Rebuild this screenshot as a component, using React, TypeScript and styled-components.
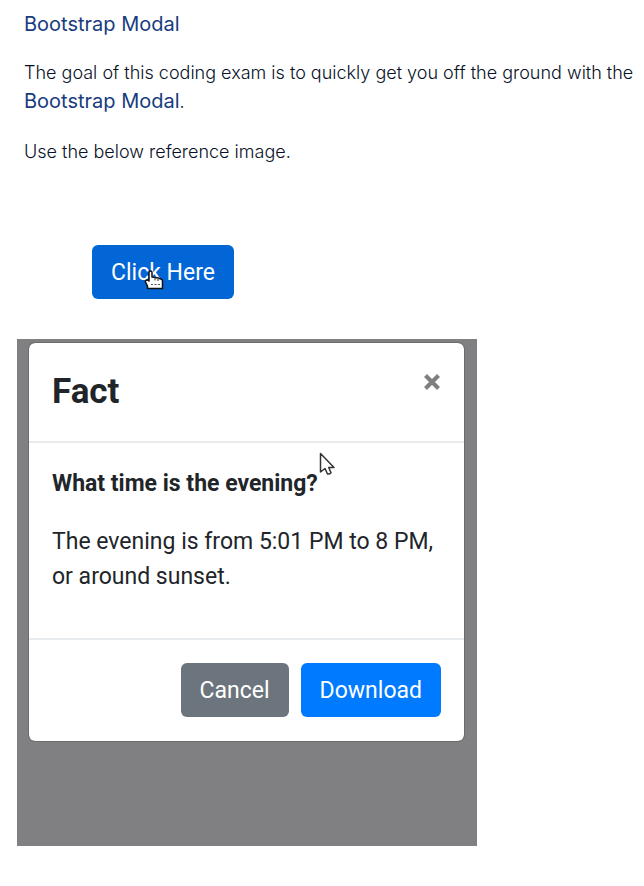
import React from 'react';
import styled, { createGlobalStyle } from 'styled-components';

const GlobalStyle = createGlobalStyle`
  *, *::before, *::after { box-sizing: border-box; }
  body {
    margin: 0;
    background: #fff;
    color: #212529;
    font-family: Roboto, "Liberation Sans", sans-serif;
  }
`;

const Page = styled.main`
  padding: 10px 0 40px;
`;

const Intro = styled.section`
  padding: 0 8px 0 24px;
  color: #071127;
  font-family: Inter, "Liberation Sans", sans-serif;
`;

const PageTitle = styled.h1`
  margin: 0 0 20px;
  color: #183b80;
  font-size: 20px;
  font-weight: 400;
  line-height: 28px;
`;

const IntroText = styled.p`
  margin: 0 0 21px;
  font-size: 18px;
  font-weight: 300;
  line-height: 29px;
`;

const Topic = styled.span`
  color: #183b80;
  font-size: 20px;
  font-weight: 400;
`;

const Button = styled.button<{ $color: string }>`
  border: 0;
  border-radius: 6px;
  padding: 11px 19px 9px;
  background: ${({ $color }) => $color};
  color: #fff;
  font-family: inherit;
  font-size: 23px;
  line-height: 34px;
  cursor: pointer;
`;

const LaunchArea = styled.div`
  display: flex;
  position: relative;
  width: fit-content;
  margin: 79px 0 40px 92px;
`;

const HandPointer = styled.svg`
  position: absolute;
  left: 52px;
  top: 25px;
  pointer-events: none;
`;

const Backdrop = styled.div`
  max-width: 460px;
  min-height: 507px;
  margin: 0 17px;
  padding: 3px 12px 104px 11px;
  background: #808082;
`;

const Dialog = styled.section`
  position: relative;
  border: 1px solid #6c6c6e;
  border-radius: 7px;
  background: #fff;
  background-clip: padding-box;
`;

const DialogHeader = styled.header`
  display: flex;
  justify-content: space-between;
  align-items: flex-start;
  padding: 23px;
  border-bottom: 2px solid #e9ecef;
`;

const DialogTitle = styled.h2`
  margin: 0;
  font-size: 35px;
  font-weight: 700;
  line-height: 52px;
`;

const CloseButton = styled.button`
  display: flex;
  border: 0;
  padding: 7px 0;
  background: transparent;
  color: #7f7f7f;
  cursor: pointer;
`;

const DialogBody = styled.div`
  padding: 23px 23px 44px;
  font-size: 23px;
  line-height: 35px;
`;

const Question = styled.h3`
  margin: 0 0 23px;
  font-size: 23px;
  font-weight: 700;
  line-height: 35px;
`;

const Answer = styled.p`
  margin: 0;
`;

const DialogFooter = styled.footer`
  display: flex;
  justify-content: flex-end;
  gap: 12px;
  padding: 23px 23px 24px;
  border-top: 2px solid #e9ecef;
`;

const ArrowPointer = styled.svg`
  position: absolute;
  left: 290px;
  top: 109px;
  pointer-events: none;
`;

export default function App() {
  return (
    <Page>
      <GlobalStyle />
      <Intro>
        <PageTitle>Bootstrap Modal</PageTitle>
        <IntroText>
          The goal of this coding exam is to quickly get you off the ground with the{' '}
          <Topic>Bootstrap Modal</Topic>.
        </IntroText>
        <IntroText>Use the below reference image.</IntroText>
      </Intro>

      <LaunchArea>
        <Button type="button" $color="#0366d6">Click Here</Button>
        <HandPointer width="20" height="20" viewBox="0 0 20 20" aria-hidden="true">
          <path
            d="M5 11V2.500Q5 1 6.500 1T8 2.500V7l3 .5 3 .5 3 1q1.500.5 1.500 2v7.500H3.500V16L1.500 12q-.3-2 1.500-2T5 11Z"
            fill="#fff"
            stroke="#111"
            strokeWidth="1.500"
            strokeLinejoin="round"
          />
          <path d="M11 7.500v3m3-2.500v3M7 14.500h2m1.500 0h2m1.500 0h2" stroke="#555" strokeWidth="1.200" />
        </HandPointer>
      </LaunchArea>

      <Backdrop>
        <Dialog role="dialog" aria-labelledby="fact-title">
          <DialogHeader>
            <DialogTitle id="fact-title">Fact</DialogTitle>
            <CloseButton type="button" aria-label="Close">
              <svg width="18" height="18" viewBox="0 0 18 18" aria-hidden="true">
                <path d="M2.500 2.500l13 13m0-13l-13 13" stroke="currentColor" strokeWidth="4.200" />
              </svg>
            </CloseButton>
          </DialogHeader>
          <DialogBody>
            <Question>What time is the evening?</Question>
            <Answer>The evening is from 5:01 PM to 8 PM, or around sunset.</Answer>
          </DialogBody>
          <DialogFooter>
            <Button type="button" $color="#6c757d">Cancel</Button>
            <Button type="button" $color="#007bff">Download</Button>
          </DialogFooter>
          <ArrowPointer width="17" height="24" viewBox="0 0 17 24" aria-hidden="true">
            <path
              d="M1.500 1.500V20l4.500-3.500 2.500 5.500q2 .5 3.500-1.200l-2.300-5.300h5.300Z"
              fill="#fff"
              stroke="#333"
              strokeWidth="1.500"
              strokeLinejoin="round"
            />
          </ArrowPointer>
        </Dialog>
      </Backdrop>
    </Page>
  );
}
